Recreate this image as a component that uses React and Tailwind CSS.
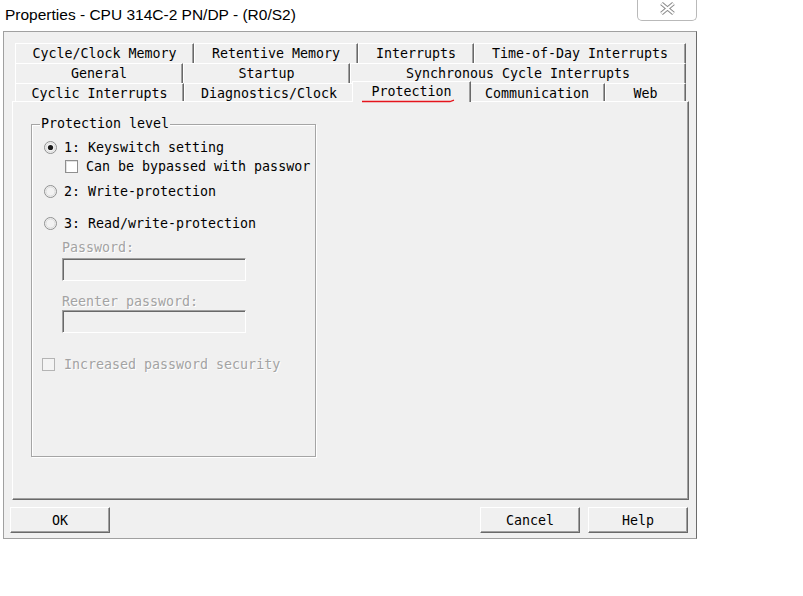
import React from "react";

const tabRows = [
  [
    { label: "Cycle/Clock Memory", w: "w-[179px]" },
    { label: "Retentive Memory", w: "w-[164px]" },
    { label: "Interrupts", w: "w-[116px]" },
    { label: "Time-of-Day Interrupts", w: "w-[212px]" },
  ],
  [
    { label: "General", w: "w-[168px]" },
    { label: "Startup", w: "w-[167px]" },
    { label: "Synchronous Cycle Interrupts", w: "w-[336px]" },
  ],
  [
    { label: "Cyclic Interrupts", w: "w-[169px]" },
    { label: "Diagnostics/Clock", w: "w-[170px]" },
    { label: "Protection", w: "w-[119px]", active: true },
    { label: "Communication", w: "w-[136px]" },
    { label: "Web", w: "w-[81px]" },
  ],
];

function Tab({ label, w, active, h }) {
  if (active) {
    return (
      <div
        className={
          w +
          " relative z-10 -mx-[2px] -mt-[2px] h-[21px] shrink-0 bg-[#f0f0f0] border-t border-l border-white border-r border-r-[#696969] shadow-[inset_-1px_0_0_#a0a0a0] flex items-center justify-center leading-[16px] pb-[1px]"
        }
      >
        {label}
        {/* red hand-drawn underline */}
        <svg className="absolute left-[8px] top-[17px]" width="95" height="4" viewBox="0 0 95 4">
          <path d="M1 2.5 L89 2.5 L93 1.2" fill="none" stroke="#e5141c" strokeWidth="1.3" />
        </svg>
      </div>
    );
  }
  return (
    <div
      className={
        w +
        " " +
        h +
        " shrink-0 border-t border-l border-white border-r border-r-[#696969] shadow-[inset_-1px_0_0_#a0a0a0] flex items-center justify-center leading-[16px]"
      }
    >
      {label}
    </div>
  );
}

function Radio({ checked }) {
  return (
    <svg width="13" height="13" viewBox="0 0 13 13" className="shrink-0">
      <circle cx="6.5" cy="6.5" r="6" fill="#f2f2f2" stroke="#8f9090" />
      <circle cx="6.5" cy="6.5" r="4.5" fill="none" stroke="#dcdcdc" />
      {checked && <circle cx="6.5" cy="6.5" r="2.6" fill="#1b1b1b" />}
    </svg>
  );
}

function Check({ disabled }) {
  return (
    <div
      className={
        "w-[13px] h-[13px] shrink-0 border " +
        (disabled
          ? "border-[#b4b4b4] bg-[#f4f4f4]"
          : "border-[#8f8f8f] bg-white shadow-[inset_1px_1px_0_#e2e2e2]")
      }
    />
  );
}

function Field() {
  return (
    <div className="ml-[30px] w-[184px] h-[23px] bg-[#f0f0f0] border border-t-[#a0a0a0] border-l-[#a0a0a0] border-b-white border-r-white shadow-[inset_1px_1px_0_#696969]" />
  );
}

function Button({ children }) {
  return (
    <button className="w-[100px] h-[26px] pt-[2px] bg-[#f0f0f0] border border-t-white border-l-white border-r-[#696969] border-b-[#696969] shadow-[inset_-1px_-1px_0_#a0a0a0] leading-[16px]">
      {children}
    </button>
  );
}

export default function App() {
  const dim = "text-[#a3a3a3] [text-shadow:1px_1px_0_#ffffff]";
  return (
    <div className="w-[803px] h-[596px] bg-white text-black font-['DejaVu_Sans_Mono','Liberation_Mono',monospace] text-[13.3px]">
      <div className="w-[697px]">
        {/* title bar */}
        <div className="h-[31px] flex items-start bg-white">
          <div className="pl-[5px] pt-[5px] font-['Liberation_Sans',Arial,sans-serif] text-[15.5px] leading-[20px]">
            Properties - CPU 314C-2 PN/DP - (R0/S2)
          </div>
          <div className="ml-auto w-[60px] h-[21px] border border-t-0 border-[#b9b9b9] rounded-b-[5px] flex items-center justify-center pb-[3px]">
            <svg width="17" height="13" viewBox="0 0 17 13">
              <path d="M2.5 1.5 L14.5 11.5 M14.5 1.5 L2.5 11.5" stroke="#8c8c8c" strokeWidth="4" fill="none" />
              <path d="M2.5 1.5 L14.5 11.5 M14.5 1.5 L2.5 11.5" stroke="#ffffff" strokeWidth="2" fill="none" />
            </svg>
          </div>
        </div>

        {/* dialog body */}
        <div className="ml-[3px] w-[694px] h-[508px] bg-[#f0f0f0] border border-[#a0a0a0] border-r-[#6b6b6b]">
          <div className="pt-[11px] pl-[8px]">
            <div className="ml-[3px] w-[671px] flex flex-col">
              <div className="flex">
                {tabRows[0].map((t) => (
                  <Tab key={t.label} {...t} h="h-[20px]" />
                ))}
              </div>
              <div className="flex">
                {tabRows[1].map((t) => (
                  <Tab key={t.label} {...t} h="h-[20px]" />
                ))}
              </div>
              <div className="flex items-start h-[18px]">
                {tabRows[2].map((t) => (
                  <Tab key={t.label} {...t} h="h-[18px] pt-[2px]" />
                ))}
              </div>
            </div>

            {/* tab page */}
            <div className="w-[677px] h-[399px] border-t border-l border-white border-r border-b border-r-[#696969] border-b-[#696969] shadow-[inset_-1px_-1px_0_#a0a0a0] pl-[18px] pt-[22px]">
              <div className="relative w-[285px] h-[333px] border border-[#a5a5a5] shadow-[inset_1px_1px_0_#ffffff,1px_1px_0_#ffffff] flex flex-col leading-[16px]">
                <div className="absolute left-[8px] -top-[9px] px-[1px] bg-[#f0f0f0]">Protection level</div>

                <div className="mt-[14px] h-[16px] pl-[12px] flex items-center gap-[7px]">
                  <Radio checked />
                  <span className="pt-[2px]">1: Keyswitch setting</span>
                </div>
                <div className="mt-[3px] h-[16px] pl-[33px] flex items-center gap-[8px]">
                  <Check />
                  <span className="pt-[2px] whitespace-nowrap">Can be bypassed with passwor</span>
                </div>
                <div className="mt-[9px] h-[16px] pl-[12px] flex items-center gap-[7px]">
                  <Radio />
                  <span className="pt-[2px]">2: Write-protection</span>
                </div>
                <div className="mt-[16px] h-[16px] pl-[12px] flex items-center gap-[7px]">
                  <Radio />
                  <span className="pt-[2px]">3: Read/write-protection</span>
                </div>

                <div className={"mt-[8px] h-[16px] pt-[1px] pl-[30px] " + dim}>Password:</div>
                <div className="mt-[3px]">
                  <Field />
                </div>
                <div className={"mt-[12px] h-[16px] pt-[1px] pl-[30px] " + dim}>Reenter password:</div>
                <div className="mt-[1px]">
                  <Field />
                </div>

                <div className="mt-[23px] h-[16px] pl-[10px] flex items-center gap-[9px]">
                  <Check disabled />
                  <span className={"pt-[2px] " + dim}>Increased password security</span>
                </div>
              </div>
            </div>
          </div>

          {/* buttons */}
          <div className="mt-[7px] pl-[6px] pr-[8px] flex">
            <Button>OK</Button>
            <div className="ml-auto flex gap-[8px]">
              <Button>Cancel</Button>
              <Button>Help</Button>
            </div>
          </div>
        </div>
      </div>
    </div>
  );
}
